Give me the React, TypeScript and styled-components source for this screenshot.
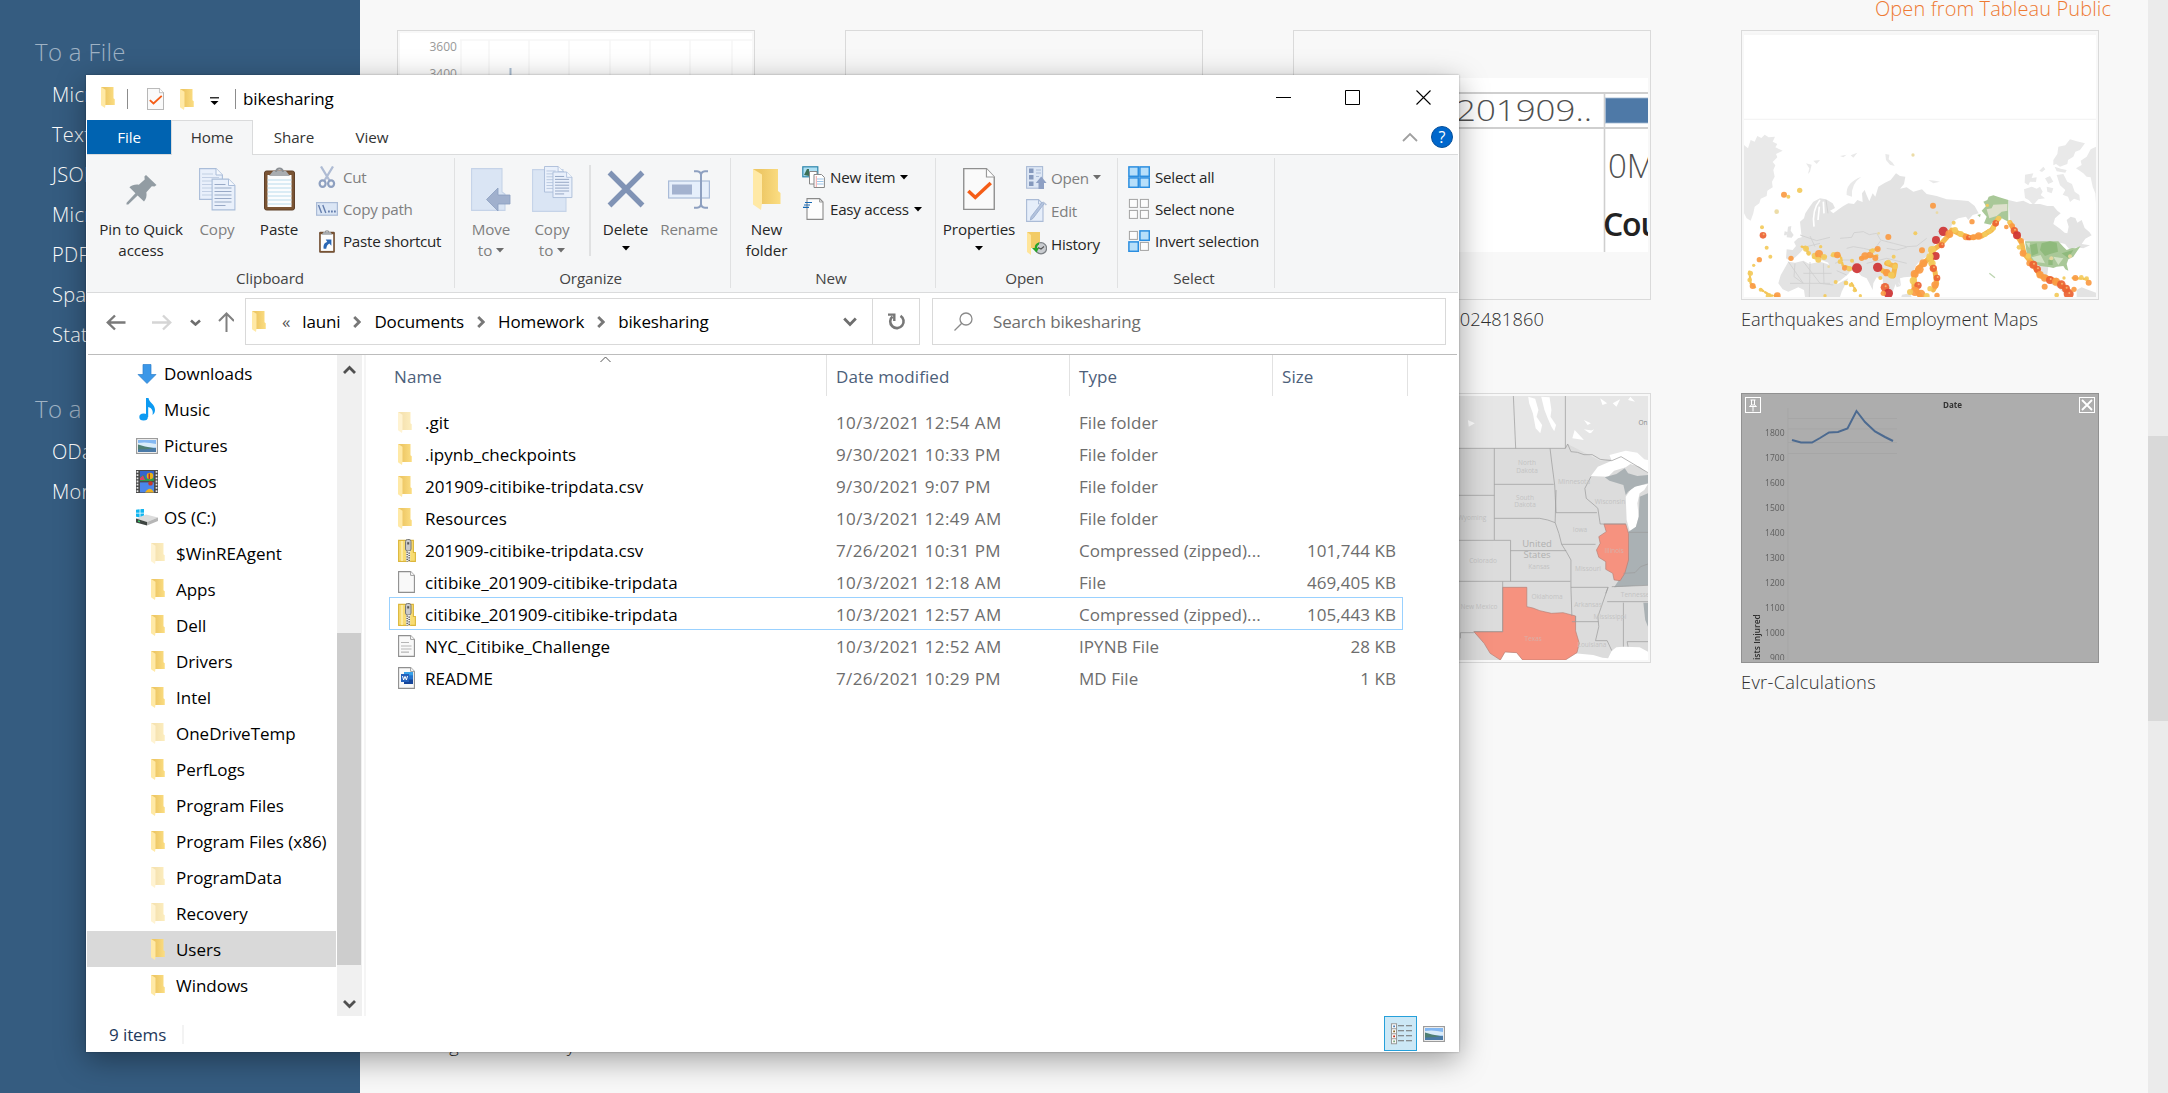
import React from 'react';
import styled, { createGlobalStyle, css } from 'styled-components';

const ui = `'Open Sans', 'Noto Sans', 'Liberation Sans', sans-serif`;

const Global = createGlobalStyle`
  html, body { margin: 0; padding: 0; background: #f8f8f8; }
  * { box-sizing: border-box; }
  svg { display: block; flex: none; }
`;

/* ---------- Tableau start page ---------- */

const Page = styled.div`
  position: relative;
  display: flex;
  width: 2168px;
  height: 1093px;
  overflow: hidden;
  background: #f8f8f8;
  font-family: ${ui};
`;

const Sidebar = styled.aside`
  width: 360px;
  flex: none;
  background: #355c80;
  padding-top: 33px;
`;

const SideHeading = styled.h2<{ $gap?: number }>`
  margin: ${p => p.$gap ?? 0}px 0 5px 35px;
  height: 37px;
  line-height: 37px;
  font-size: 24px;
  font-weight: 300;
  letter-spacing: 0.3px;
  color: #9fb2c4;
`;

const SideItem = styled.div`
  padding-left: 52px;
  height: 40px;
  line-height: 40px;
  font-size: 20px;
  font-weight: 300;
  letter-spacing: 0.3px;
  color: #ffffff;
`;

const Main = styled.main`
  flex: 1;
  min-width: 0;
`;

const TopLink = styled.div`
  height: 30px;
  padding-right: 37px;
  text-align: right;
  font-size: 20px;
  letter-spacing: 0.1px;
  line-height: 17px;
  font-weight: 300;
  color: #ee7a33;
`;

const CardGrid = styled.div`
  display: grid;
  grid-template-columns: repeat(4, 358px);
  grid-auto-rows: 363px;
  column-gap: 90px;
  padding-left: 37px;
`;

const Card = styled.div`
  display: flex;
  flex-direction: column;
`;

const Thumb = styled.div<{ $hover?: boolean }>`
  position: relative;
  width: 358px;
  height: 270px;
  padding: 2px;
  border: 1px solid ${p => (p.$hover ? '#919191' : '#dadada')};
  background: ${p => (p.$hover ? '#adadad' : '#f8f8f8')};
`;

const CardLabel = styled.div<{ $track?: number; $w?: number }>`
  padding-top: 5px;
  width: ${p => (p.$w ? `${p.$w}px` : 'auto')};
  text-align: ${p => (p.$w ? 'right' : 'left')};
  line-height: 27px;
  font-size: 18.3px;
  font-weight: 300;
  letter-spacing: ${p => p.$track ?? 0}px;
  white-space: nowrap;
  color: #2e2e2e;
`;

const CornerButton = styled.div<{ $side: 'left' | 'right' }>`
  position: absolute;
  top: 3px;
  ${p => p.$side}: 3px;
  display: flex;
  align-items: center;
  justify-content: center;
  width: 16px;
  height: 16px;
  border: 1px solid #fff;
`;

const PageScroll = styled.div`
  width: 20px;
  flex: none;
  background: #ebebeb;
  padding-top: 436px;
`;

const PageThumb = styled.div`
  height: 285px;
  background: #d9d9d9;
`;

/* ---------- Explorer window ---------- */

const Window = styled.section`
  position: absolute;
  left: 86px;
  top: 75px;
  width: 1373px;
  height: 977px;
  display: flex;
  flex-direction: column;
  padding: 0 1px;
  background: #fff;
  box-shadow: 0 0 2px rgba(0, 0, 0, 0.3), 0 8px 28px rgba(0, 0, 0, 0.36);
  color: #000;
  font-size: 17px;
`;

const TitleBar = styled.header`
  display: flex;
  align-items: center;
  height: 45px;
  flex: none;
  padding-left: 14px;
`;

const TitleIcon = styled.span<{ $ml?: number; $mt?: number }>`
  display: flex;
  margin-left: ${p => p.$ml ?? 0}px;
  margin-top: ${p => p.$mt ?? 0}px;
`;

const TitleSep = styled.i<{ $ml: number }>`
  width: 1px;
  height: 20px;
  margin: 2px 0 0 ${p => p.$ml}px;
  background: #8c8c8c;
`;

const TitleText = styled.span`
  margin-left: 7px;
  margin-top: 2px;
  letter-spacing: -0.12px;
`;

const Controls = styled.div`
  display: flex;
  align-items: center;
  margin-left: auto;
  margin-top: -1px;
  gap: 54px;
  padding-right: 27px;
  & > :last-child { margin-left: 2px; }
`;

const Tabs = styled.nav`
  display: flex;
  align-items: stretch;
  height: 35px;
  flex: none;
  border-bottom: 1px solid #dadbdc;
`;

const Tab = styled.div<{ $kind?: 'file' | 'active'; $w: number }>`
  display: flex;
  align-items: center;
  justify-content: center;
  width: ${p => p.$w}px;
  font-size: 15.2px;
  letter-spacing: -0.1px;
  color: #333;
  padding-bottom: ${p => (p.$kind === 'active' ? 2 : 1)}px;
  ${p => p.$kind === 'file' && css`background: #0063b1; color: #fff;`}
  ${p =>
    p.$kind === 'active' &&
    css`
      background: #f5f6f7;
      border: 1px solid #dadbdc;
      border-bottom: 0;
      margin-bottom: -1px;
    `}
`;

const TabTools = styled.div`
  display: flex;
  align-items: center;
  gap: 13px;
  margin-left: auto;
  padding-right: 5px;
`;

const Help = styled.span`
  display: flex;
  align-items: center;
  justify-content: center;
  width: 22px;
  height: 22px;
  border-radius: 50%;
  border: 1px solid #06509a;
  background: #0067cc;
  color: #fff;
  font-size: 16px;
  line-height: 20px;
`;

const Ribbon = styled.div`
  display: flex;
  height: 138px;
  flex: none;
  background: #f5f6f7;
  border-bottom: 1px solid #dadbdc;
`;

const Group = styled.div<{ $w: number; $pl: number }>`
  display: flex;
  flex-direction: column;
  width: ${p => p.$w}px;
  font-size: 15.2px;
  color: #262626;
  & > div { padding-left: ${p => p.$pl}px; }
`;

const GroupBody = styled.div`
  display: flex;
  height: 112px;
`;

const GroupCaption = styled.span<{ $pr?: number }>`
  padding-right: ${p => p.$pr ?? 4}px;
  text-align: center;
  line-height: 23px;
  letter-spacing: -0.1px;
  color: #444;
`;

const GroupSep = styled.i`
  width: 1px;
  margin: 3px 0 4px;
  background: #e0e1e2;
`;

const InnerSep = styled.i`
  width: 2px;
  height: 91px;
  margin: 10px 4px 0 7px;
  background: #e0e1e2;
`;

const Big = styled.div<{ $w: number; $off?: boolean }>`
  display: flex;
  flex-direction: column;
  align-items: center;
  width: ${p => p.$w}px;
  padding-top: 12px;
  color: ${p => (p.$off ? '#7f7f7f' : '#262626')};
  letter-spacing: -0.1px;
`;

const BigIcon = styled.span`
  display: flex;
  align-items: center;
  height: 44px;
  margin-bottom: 8px;
`;

const BigLine = styled.span<{ $up?: boolean }>`
  display: flex;
  align-items: center;
  gap: 4px;
  height: 21px;
  line-height: 21px;
  padding-bottom: ${p => (p.$up ? 4 : 0)}px;
  white-space: nowrap;
`;

const SmallCol = styled.div<{ $ml?: number; $row?: number }>`
  display: grid;
  grid-auto-rows: ${p => p.$row ?? 32}px;
  align-content: start;
  margin-left: ${p => p.$ml ?? 0}px;
  padding-top: 6px;
`;

const Small = styled.div<{ $off?: boolean; $icon?: number; $gap?: number }>`
  display: grid;
  grid-template-columns: ${p => p.$icon ?? 22}px auto auto;
  justify-content: start;
  justify-items: center;
  align-items: center;
  column-gap: ${p => p.$gap ?? 5}px;
  white-space: nowrap;
  letter-spacing: -0.27px;
  color: ${p => (p.$off ? '#7f7f7f' : '#262626')};
`;

const AddressRow = styled.div`
  display: flex;
  align-items: center;
  height: 62px;
  flex: none;
  margin: 0 1px;
  padding-bottom: 5px;
  border-bottom: 1px solid #bcbcbc;
`;

const NavIcon = styled.span<{ $ml: number }>`
  display: flex;
  margin-left: ${p => p.$ml}px;
  margin-top: 2px;
`;

const AddressBox = styled.div`
  display: flex;
  align-items: center;
  width: 675px;
  height: 47px;
  margin-left: 11px;
  margin-top: 1px;
  border: 1px solid #d9d9d9;
  padding-left: 6px;
`;

const Crumbs = styled.div`
  display: flex;
  align-items: center;
  gap: 13px;
  margin-left: 13px;
  letter-spacing: -0.15px;
`;

const Chevrons = styled.span`
  color: #555;
  margin: 0 -1px 0 3px;
  font-size: 17px;
  line-height: 20px;
`;

const AddressDrop = styled.span`
  margin-left: auto;
  padding-right: 15px;
`;

const Refresh = styled.span`
  display: flex;
  align-items: center;
  justify-content: center;
  width: 47px;
  height: 45px;
  padding-left: 2px;
  border-left: 1px solid #d9d9d9;
`;

const SearchBox = styled.div`
  display: flex;
  align-items: center;
  gap: 20px;
  width: 514px;
  height: 47px;
  margin-left: 12px;
  margin-top: 1px;
  padding-left: 21px;
  border: 1px solid #d9d9d9;
  color: #6d6d6d;
  letter-spacing: -0.15px;
`;

const Body = styled.div`
  display: flex;
  flex: 1;
  min-height: 0;
`;

const Tree = styled.div`
  width: 249px;
  flex: none;
  margin-right: 1px;
`;

const TreeRow = styled.div<{ $deep?: boolean; $on?: boolean }>`
  display: flex;
  align-items: center;
  gap: ${p => (p.$deep ? 11 : 6)}px;
  height: 36px;
  padding: 1px 0 0 ${p => (p.$deep ? 64 : 49)}px;
  background: ${p => (p.$on ? '#d9d9d9' : 'transparent')};
  letter-spacing: -0.02px;
  white-space: nowrap;
`;

const TreeScroll = styled.div`
  display: flex;
  flex-direction: column;
  align-items: center;
  width: 25px;
  height: 661px;
  flex: none;
  background: #f0f0f0;
`;

const ScrollArrow = styled.span<{ $h: number; $pt: number }>`
  height: ${p => p.$h}px;
  padding-top: ${p => p.$pt}px;
`;

const TreeThumb = styled.i`
  align-self: flex-start;
  width: 24px;
  height: 332px;
  background: #cdcdcd;
`;

const Splitter = styled.i`
  width: 2px;
  height: 661px;
  margin: 0 1px 0 2px;
  background: #f5f5f5;
`;

const List = styled.div`
  flex: 1;
  min-width: 0;
`;

const HeadRow = styled.div`
  position: relative;
  display: flex;
  height: 41px;
`;

const HeadCell = styled.div<{ $w: number; $pl: number }>`
  display: flex;
  align-items: center;
  width: ${p => p.$w}px;
  padding: 1px 0 0 ${p => p.$pl}px;
  border-right: 1px solid #e2e2e2;
  color: #4c607a;
  letter-spacing: 0.08px;
`;

const SortMark = styled.span`
  position: absolute;
  left: 233px;
  top: 1px;
`;

const FileRows = styled.div`
  padding: 9px 0 0 22px;
`;

const FileRow = styled.div<{ $on?: boolean }>`
  display: grid;
  grid-template-columns: 27px 411px 243px 190px 1fr;
  align-items: center;
  width: 1014px;
  height: 33px;
  margin-bottom: -1px;
  padding: 1px 6px 0 8px;
  border: 1px solid ${p => (p.$on ? '#99d1ff' : 'transparent')};
  white-space: nowrap;
`;

const FileName = styled.span`
  letter-spacing: 0.03px;
`;

const Meta = styled.span<{ $right?: boolean; $track?: number }>`
  color: #6d6d6d;
  letter-spacing: ${p => p.$track ?? 0.05}px;
  text-align: ${p => (p.$right ? 'right' : 'left')};
`;

const Status = styled.footer`
  display: flex;
  align-items: center;
  height: 36px;
  flex: none;
  padding: 0 13px 0 22px;
  color: #1e395b;
  letter-spacing: -0.1px;
`;

const StatusSep = styled.i`
  width: 2px;
  height: 19px;
  margin-left: 16px;
  background: #f3f3f3;
`;

const ViewButton = styled.span`
  display: flex;
  align-items: center;
  justify-content: center;
  width: 33px;
  height: 35px;
  margin: 0 6px 1px auto;
  border: 1px solid #26a0da;
  background: #cce8f6;
`;

/* ---------- Icons ---------- */

const Folder = ({ w = 14, h = 21, faded = false }) => (
  <svg width={w} height={h} viewBox="0 0 28 41" preserveAspectRatio="none" opacity={faded ? 0.5 : 1}>
    <defs>
      <linearGradient id="fold" x1="0" x2="1">
        <stop offset="0.3" stopColor="#eec866" />
        <stop offset="1" stopColor="#fbdd82" />
      </linearGradient>
    </defs>
    <path d="M0 0H25V22L27.5 24V35H8Z" fill="url(#fold)" />
    <path d="M0 0L9 5.5V34L8 41L0 35.5Z" fill="#ffe9a6" />
  </svg>
);

const Tri = ({ c = '#000', w = 8 }) => (
  <svg width={w} height="5" viewBox="0 0 8 5">
    <path d="M0 0H8L4 4.6Z" fill={c} />
  </svg>
);

const CheckDoc = ({ w, h }: { w: number; h: number }) => (
  <svg width={w} height={h} viewBox="0 0 30 42" preserveAspectRatio="none">
    <path d="M.7 .7H22L29.3 9V41.3H.7Z" fill="#fafafa" stroke="#8f8f8f" strokeWidth="1.3" />
    <path d="M22 .7V9H29.3" fill="#fff" stroke="#9a9a9a" strokeWidth="1.1" />
    <path d="M5 23L11.5 29.5L26 15" fill="none" stroke="#f55d17" strokeWidth="3.2" />
  </svg>
);

const Pin = () => (
  <svg width="31" height="31" viewBox="0 0 31 31" fill="#929ca3">
    <path d="M20 1L30.5 11L28.5 12.6L25.8 12.2L20.4 18.2C20.9 22 20.2 25 18 27.6L11.6 21.4L2.3 30.4L.4 30.6L.6 28.7L9.4 19.2L3.4 13.2C6 11 9 10.3 12.8 10.7L18.7 5.4L18.4 2.6Z" />
  </svg>
);

const Sheet = ({ x, y, lines }: { x: number; y: number; lines: string }) => (
  <g transform={`translate(${x} ${y})`}>
    <path d="M.6 .6H17L23.4 7V31.4H.6Z" fill="#e9f0fb" stroke="#aabdd9" strokeWidth="1.1" />
    <path d="M17 .6V7H23.4" fill="#f5f8fd" stroke="#aabdd9" strokeWidth="1" />
    <path d="M3 6H14M3 9.5H20M3 13H20M3 16.5H20M3 20H20M3 23.5H20M3 27H14" stroke={lines} strokeWidth="1.1" />
  </g>
);

const CopyIcon = () => (
  <svg width="37" height="43" viewBox="0 0 37 43">
    <Sheet x={0} y={0} lines="#c2cfe4" />
    <Sheet x={12.5} y={10.5} lines="#98a9c6" />
  </svg>
);

const PasteIcon = ({ w = 31, h = 44, small = false }) => (
  <svg width={w} height={h} viewBox="0 0 31 44" preserveAspectRatio="none">
    <rect x=".5" y="4" width="30" height="39" rx="2" fill="#7a5434" stroke="#5f4029" />
    <rect x="3.5" y="8" width="24" height="32" fill="#fcfdfe" />
    <path d="M5 9H26L22 4H9Z" fill="#a9adb1" />
    <path d="M12 5A3.5 3.5 0 0 1 19 5" fill="none" stroke="#8b8f94" strokeWidth="2" />
    {small ? (
      <path d="M9 36C8 28 11 24 16 23L13 18H24V30L20 26C16 28 15 31 14 36Z" fill="#2a67b5" />
    ) : (
      <path d="M3.5 13H27.5M3.5 17H27.5M3.5 21H27.5M3.5 25H27.5M3.5 29H27.5M3.5 33H27.5M3.5 37H27.5" stroke="#b9dcec" strokeWidth="1.2" />
    )}
  </svg>
);

const CutIcon = () => (
  <svg width="18" height="22" viewBox="0 0 18 22" fill="none">
    <path d="M3 .5L11.8 15M15 .5L6.2 15" stroke="#afbcd4" strokeWidth="2.3" />
    <ellipse cx="4.6" cy="17.6" rx="3" ry="3.3" stroke="#8ea0c0" strokeWidth="2.2" />
    <ellipse cx="13.1" cy="17.6" rx="3" ry="3.3" stroke="#8ea0c0" strokeWidth="2.2" />
  </svg>
);

const PathIcon = () => (
  <svg width="22" height="14" viewBox="0 0 22 14">
    <rect x=".6" y=".6" width="20.8" height="12.6" fill="#dbe6f5" stroke="#aabbd6" strokeWidth="1.2" />
    <path d="M2.5 3L5.5 11M6.8 3L9.8 11" stroke="#667fae" strokeWidth="1.4" />
    <path d="M12 9.5H13.8M15 9.5H16.8M18 9.5H19.8" stroke="#667fae" strokeWidth="1.8" />
  </svg>
);

const MoveIcon = () => (
  <svg width="40" height="43" viewBox="0 0 40 43">
    <path d="M.6 .6H31V24L34 26V42.4H.6Z" fill="#dae5f4" stroke="#c5d3e8" strokeWidth="1.1" />
    <path d="M15.5 31.5L27 20V27H39V36H27V43Z" fill="#a0b0cd" stroke="#8c9ebf" strokeWidth=".8" />
  </svg>
);

const CopyToIcon = () => (
  <svg width="41" height="46" viewBox="0 0 41 46">
    <path d="M.6 3.6H31V30L34 32V45.4H.6Z" fill="#dae5f4" stroke="#c5d3e8" strokeWidth="1.1" />
    <g transform="translate(12 0) scale(.83)"><Sheet x={0} y={0} lines="#b7c6de" /></g>
    <g transform="translate(20.5 5.5) scale(.83)"><Sheet x={0} y={0} lines="#8ea0c0" /></g>
  </svg>
);

const DeleteIcon = () => (
  <svg width="38" height="38" viewBox="0 0 38 38">
    <path d="M2.5 2.5L35.5 35.5M35.5 2.5L2.5 35.5" stroke="#8093b5" strokeWidth="5.4" />
  </svg>
);

const RenameIcon = () => (
  <svg width="42" height="39" viewBox="0 0 42 39">
    <rect x=".6" y="11" width="40.8" height="17" fill="#e6effb" stroke="#a9bbd8" strokeWidth="1.2" />
    <rect x="4" y="14.5" width="20" height="10" fill="#a3b2cf" />
    <path d="M26 1.2H29Q33 1.8 33 5V34Q33 37.2 29 37.8H26M40 1.2H37Q33 1.8 33 5M33 34Q33 37.2 37 37.8H40" fill="none" stroke="#8ea0c0" strokeWidth="2" />
  </svg>
);

const NewItemIcon = () => (
  <svg width="23" height="22" viewBox="0 0 23 22">
    <rect x=".8" y=".8" width="15" height="10" fill="#aee0f4" stroke="#2d86ab" strokeWidth="1.2" />
    <path d="M2 9L5 3H7V10Z" fill="#3c6f56" />
    <path d="M7.5 5.5H15V18H7.5Z" fill="#fff" stroke="#888" />
    <path d="M12 8.5H19.5L22.4 11.4V21.5H12Z" fill="#fff" stroke="#888" />
    <path d="M14.3 10V21" stroke="#ef8d8d" strokeWidth=".8" />
    <path d="M15 13H21.5M15 15.5H21.5M15 18H21.5" stroke="#9dc4e8" strokeWidth="1" />
  </svg>
);

const EasyIcon = () => (
  <svg width="22" height="22" viewBox="0 0 22 22">
    <path d="M4 .6H16.6L20 4V21.4H4Z" fill="#fdfdfd" stroke="#8a8a8a" strokeWidth="1.1" />
    <path d="M16.6 .6V4H20" fill="none" stroke="#9a9a9a" />
    <path d="M2 4.5H9M1 7H7M0 9.3H6" stroke="#1668b3" strokeWidth="1.2" />
  </svg>
);

const OpenIcon = () => (
  <svg width="21" height="23" viewBox="0 0 21 23">
    <rect x=".6" y=".6" width="16" height="21.6" fill="#dde7f5" stroke="#aabbd6" strokeWidth="1.1" />
    <path d="M3 2.5H7.5V7H3ZM3 9H7.5V13.5H3ZM3 15.5H7.5V20H3Z" fill="#8599bd" />
    <path d="M10 4H15M10 7H15M10 10.5H13" stroke="#aabbd6" />
    <path d="M15.2 10.5L20.6 17H18V23H12.5V17H9.8Z" fill="#8ea0c4" />
  </svg>
);

const EditIcon = () => (
  <svg width="21" height="23" viewBox="0 0 21 23">
    <path d="M.6 .6H12.5L17 5V22.4H.6Z" fill="#e6eefa" stroke="#aabbd6" strokeWidth="1.1" />
    <path d="M12.5 .6V5H17" fill="none" stroke="#aabbd6" />
    <path d="M18.2 4.6L7 19.4L4.4 21L5 17.8L16.2 3.2Z" fill="#b3c3de" stroke="#9cafce" strokeWidth=".9" />
    <path d="M17 3L20.4 6" stroke="#b5c2d8" strokeWidth="1.6" />
  </svg>
);

const HistoryIcon = () => (
  <svg width="21" height="23" viewBox="0 0 21 23">
    <path d="M1 0H14V16H5Z" fill="#f2cb66" />
    <path d="M1 0L5 3V23L1 20Z" fill="#ffe59a" />
    <circle cx="15" cy="16.3" r="5.6" fill="#c9ccd0" stroke="#7c8085" strokeWidth="1.3" />
    <path d="M12 15.500L15 17L18 14.500" fill="none" stroke="#555" strokeWidth="1.1" />
    <path d="M13 10.5Q8.5 11.5 8.8 16H6L10.5 20.5L13 16H11Q11 13 13 12.5Z" fill="#29a329" />
  </svg>
);

const Tiles = ({ on }: { on: boolean[] }) => (
  <svg width="22" height="22" viewBox="0 0 22 22">
    {on.map((v, i) => {
      const x = (i % 2) * 11, y = Math.floor(i / 2) * 11;
      return v ? (
        <rect key={i} x={x + 0.9} y={y + 0.9} width="9.4" height="9.4" fill="#b7dffa" stroke="#2b8ee0" strokeWidth="1.5" />
      ) : (
        <rect key={i} x={x + 1.4} y={y + 1.4} width="8" height="8" fill="#fcfcfc" stroke="#a2a2a2" />
      );
    })}
  </svg>
);

const DownloadIcon = () => (
  <svg width="22" height="22" viewBox="0 0 22 22">
    <path d="M7 1.5H15V11.5H20L11 20.5L2 11.5H7Z" fill="#3b97e8" stroke="#2d80cc" strokeWidth=".7" />
  </svg>
);

const MusicIcon = () => (
  <svg width="22" height="23" viewBox="0 0 22 23" fill="#0c9af2">
    <ellipse cx="7.6" cy="19" rx="4.3" ry="3.5" />
    <path d="M10 0H12.5C13 4.5 19 6 19 12C19 14 18 16 16.5 17C17.5 13 16 10 12.2 9V19H10Z" />
  </svg>
);

const PictureIcon = ({ h = 16 }) => (
  <svg width="22" height={h} viewBox="0 0 22 16" preserveAspectRatio="none">
    <rect x=".6" y=".6" width="20.8" height="14.8" fill="#fff" stroke="#9c9c9c" strokeWidth="1.2" />
    <rect x="2" y="2" width="18" height="12" fill="#84b8f2" />
    <path d="M2 5Q10 3.500 20 6V9.500H2Z" fill="#d9ecfa" />
    <path d="M2 6.500L9 8.500L20 10.500V14H2Z" fill="#4f7f73" />
    <path d="M2 11.500Q10 11.500 20 10V14H2Z" fill="#4a7aa8" />
  </svg>
);

const VideoIcon = () => (
  <svg width="22" height="23" viewBox="0 0 22 23">
    <rect width="22" height="23" fill="#4b4b4b" />
    <path d="M1.5 1V23M20.5 1V23" stroke="#e8e8e8" strokeWidth="1.7" strokeDasharray="1.8 1.4" />
    <rect x="4" y="1" width="14" height="10" fill="#3565cf" />
    <rect x="4" y="12.4" width="14" height="10" fill="#4b86ea" />
    <path d="M4 7L8 5L10 9L18 8V11H4Z" fill="#2f9a48" />
    <path d="M4 8L7 5.5L9 10H4Z" fill="#d9416e" />
    <circle cx="14" cy="6" r="3.3" fill="#e8b117" />
    <path d="M12.5 3.5H14V9H12.5Z" fill="#bb2f21" />
    <circle cx="14.5" cy="13.4" r="2.2" fill="#c73a26" />
    <path d="M9 22.4Q14 15 18 22.4Z" fill="#f0b11c" />
  </svg>
);

const DriveIcon = () => (
  <svg width="22" height="17" viewBox="0 0 22 17">
    <path d="M0 .8L3.6 .3V3.8H0ZM4.4 .2L8 -.3V3.8H4.4ZM0 4.6H3.6V8.2L0 7.8ZM4.4 4.6H8V8.8L4.4 8.3Z" fill="#13b6f0" />
    <path d="M0 9.5L10 5.5L22 8.5L11 13Z" fill="#dcdcdc" />
    <path d="M0 9.5L11 13V16.6L0 13.5Z" fill="#3f4542" />
    <path d="M11 13L22 8.5V12L11 16.6Z" fill="#b6b6b6" />
    <path d="M2 12L4 12.6" stroke="#35d06b" strokeWidth="1.4" />
  </svg>
);

const ZipIcon = () => (
  <svg width="18" height="23" viewBox="0 0 18 23">
    <path d="M.6 1.4H15.4V13.5H17.4V22.4H.6Z" fill="#f8dc72" stroke="#dcb63c" strokeWidth="1.1" />
    <path d="M4 2V22" stroke="#fdeeb0" strokeWidth="1.6" />
    <rect x="7.5" y=".5" width="5.5" height="11.5" rx="2" fill="#c9c9c9" stroke="#77797b" strokeWidth="1" />
    <path d="M9.2 3.2H11.2V5.5H9.2Z" fill="#555" />
    <path d="M10.2 12V22.6" stroke="#e8e8e8" strokeWidth="4" />
    <path d="M9.2 12.5V22.6M11.2 13.5V22.6" stroke="#666" strokeWidth="1.6" strokeDasharray="1.2 1.2" />
  </svg>
);

const DocIcon = ({ kind }: { kind?: 'text' | 'word' }) => (
  <svg width="17" height="22" viewBox="0 0 17 22">
    <path d="M.6 .6H12.6L16.4 4.4V21.4H.6Z" fill="#f9f9f9" stroke="#8f8f8f" strokeWidth="1.1" />
    <path d="M12.6 .6V4.4H16.4" fill="#fff" stroke="#9d9d9d" />
    {kind === 'text' && <path d="M3 7.5H11M3 11H9M8.5 11H13.5M3 14H13.5M3 17.2H11" stroke="#b5b5b5" strokeWidth="1.2" />}
    {kind === 'word' && (
      <g>
        <path d="M6 5H15V11H6Z" fill="#37a0e8" />
        <path d="M6 8.3H15V13H6Z" fill="#2573cc" />
        <path d="M6 12.5H15V17H6Z" fill="#15459a" />
        <rect x="3" y="7" width="8" height="8" fill="#2360bb" />
        <path d="M4.5 9L5.6 13L7 9.4L8.4 13L9.5 9" fill="none" stroke="#fff" strokeWidth="1" />
      </g>
    )}
  </svg>
);

const Chev = ({ d, c = '#6e6e6e', w = 2.6, s }: { d: string; c?: string; w?: number; s: [number, number] }) => (
  <svg width={s[0]} height={s[1]} viewBox={`0 0 ${s[0]} ${s[1]}`} fill="none">
    <path d={d} stroke={c} strokeWidth={w} />
  </svg>
);

const CrumbArrow = () => <Chev d="M1.2 1L6.2 6L1.2 11" s={[8, 12]} w={2.8} c="#777" />;

const DetailsIcon = () => (
  <svg width="22" height="22" viewBox="0 0 22 22">
    <path d="M1.5 .8H6.5V20.8H1.5ZM1.5 5.8H6.5M1.5 10.8H6.5M1.5 15.8H6.5" fill="#fff" stroke="#999" strokeWidth="1.1" />
    <path d="M3.2 2.4H5V4.2H3.2Z" fill="#4a7fb8" />
    <path d="M3.2 7.4H5V9.2H3.2Z" fill="#8a6b2c" />
    <path d="M3.2 12.4H5V14.2H3.2Z" fill="#c22f1b" />
    <path d="M3.2 17.4H5V19.2H3.2Z" fill="#7da77d" />
    <path d="M8 2.8H14M16 2.8H22M8 7.8H14M16 7.8H22M8 12.8H14M16 12.8H22M8 17.8H14M16 17.8H22" stroke="#6f6f6f" strokeWidth="1.1" />
  </svg>
);

/* ---------- Thumbnails ---------- */

const LineThumb = () => (
  <svg width="352" height="264" fontFamily="Open Sans" fontSize="12" fill="#999">
    <rect width="352" height="264" fill="#fff" />
    <path d="M61 7V264M89 7V264M129 7V264M169 7V264M210 7V264M250 7V264M290 7V264M332 7V264M60 7H352" stroke="#f6f6f6" strokeWidth="1.4" />
    <text x="29.500" y="17.500">3600</text>
    <text x="29.500" y="45">3400</text>
    <path d="M110.500 35V60L104 120" stroke="#a9bdd2" strokeWidth="2" fill="none" />
  </svg>
);

const BarThumb = () => (
  <svg width="352" height="264" fontFamily="Open Sans">
    <rect y="45" width="352" height="174" fill="#fff" />
    <path d="M0 60H352M0 95H352" stroke="#cfcfcf" strokeWidth="2" />
    <path d="M308.500 60V219" stroke="#cfcfcf" strokeWidth="1.6" />
    <rect x="309.500" y="65" width="43" height="25" fill="#4e79a7" stroke="#a3b9d2" strokeWidth=".8" />
    <text x="160" y="88" fontSize="30" fontWeight="300" fill="#505050" textLength="136" lengthAdjust="spacingAndGlyphs">201909..</text>
    <text x="312" y="145" fontSize="33" fontWeight="300" fill="#505050">0M</text>
    <text x="307" y="203" fontSize="32" fontWeight="600" fill="#222" letterSpacing="-1.200">Cou</text>
  </svg>
);

const dots: [number, number, number, string][] = [
  [192, 584, 9, 'o'], [205, 590, 6, 'y'], [239, 571, 8, 'y'], [170, 635, 7, 'p'], [126, 682, 6, 'y'], [129, 706, 10, 'r'],
  [140, 743, 6, 'y'], [151, 770, 6, 'y'], [118, 779, 8, 'o'], [101, 796, 5, 'y'], [91, 820, 8, 'y'], [89, 840, 7, 'y'],
  [98, 858, 9, 'o'], [122, 869, 6, 'y'], [146, 888, 9, 'y'], [172, 887, 10, 'o'], [213, 775, 8, 'o'], [258, 746, 9, 'y'],
  [266, 760, 7, 'y'], [285, 768, 10, 'y'], [297, 762, 12, 'o'], [295, 779, 9, 'y'], [312, 771, 9, 'y'], [341, 764, 8, 'y'],
  [352, 765, 10, 'o'], [360, 785, 7, 'y'], [374, 804, 8, 'o'], [388, 806, 8, 'y'], [411, 805, 15, 'R'], [396, 782, 6, 'y'],
  [425, 775, 8, 'o'], [435, 768, 11, 'o'], [450, 765, 10, 'o'], [458, 752, 7, 'y'], [473, 747, 9, 'o'], [466, 774, 9, 'o'],
  [473, 802, 14, 'R'], [505, 711, 9, 'o'], [586, 700, 6, 'y'], [639, 617, 9, 'o'], [651, 638, 4, 'p'], [579, 465, 5, 'p'],
  [476, 700, 4, 'p'], [505, 787, 8, 'y'], [521, 770, 6, 'y'], [525, 800, 8, 'y'], [500, 818, 11, 'o'], [514, 826, 10, 'y'],
  [481, 834, 6, 'y'], [495, 862, 13, 'r'], [505, 880, 14, 'R'], [490, 880, 8, 'o'], [606, 751, 9, 'o'], [670, 694, 14, 'R'],
  [648, 720, 12, 'R'], [688, 702, 12, 'o'], [665, 736, 9, 'r'], [636, 750, 12, 'y'], [647, 768, 12, 'R'], [630, 770, 11, 'y'],
  [636, 790, 11, 'y'], [640, 805, 11, 'r'], [610, 790, 12, 'o'], [598, 808, 13, 'o'], [584, 822, 12, 'o'], [580, 842, 11, 'y'],
  [594, 856, 11, 'r'], [585, 874, 14, 'o'], [603, 882, 13, 'o'], [570, 876, 9, 'y'], [651, 834, 10, 'r'], [645, 855, 11, 'o'],
  [630, 866, 8, 'y'], [651, 886, 8, 'o'], [620, 888, 9, 'y'], [701, 668, 6, 'y'], [705, 690, 9, 'y'], [722, 702, 9, 'y'],
  [738, 711, 10, 'o'], [746, 713, 8, 'r'], [760, 712, 9, 'o'], [776, 708, 11, 'o'], [795, 703, 8, 'y'], [808, 694, 8, 'y'],
  [820, 684, 8, 'y'], [827, 670, 10, 'r'], [836, 655, 8, 'y'], [756, 665, 8, 'o'], [802, 616, 5, 'y'], [859, 681, 7, 'o'],
  [868, 666, 6, 'y'], [877, 678, 8, 'o'], [883, 692, 11, 'r'], [891, 706, 12, 'R'], [904, 722, 8, 'o'], [897, 742, 7, 'y'],
  [909, 760, 10, 'o'], [925, 768, 8, 'y'], [928, 790, 9, 'o'], [940, 794, 12, 'r'], [952, 808, 11, 'r'], [960, 824, 11, 'o'],
  [974, 834, 11, 'o'], [990, 840, 12, 'r'], [1008, 845, 12, 'o'], [1024, 854, 13, 'r'], [1038, 866, 12, 'r'], [1046, 882, 15, 'r'],
  [974, 860, 9, 'o'], [1010, 885, 7, 'y'], [1062, 868, 8, 'o'], [1066, 834, 9, 'o'], [1084, 832, 7, 'y'], [1100, 836, 7, 'y'],
  [1106, 848, 9, 'o'], [1032, 834, 5, 'y'], [994, 775, 6, 'p'], [1050, 769, 6, 'p'], [378, 849, 7, 'y'], [392, 855, 6, 'y'],
  [404, 871, 6, 'y'], [347, 846, 6, 'y'], [421, 887, 5, 'y'], [315, 887, 5, 'y'], [326, 800, 4, 'p'], [302, 740, 5, 'y'],
];
const dotColor: Record<string, string> = { y: '#f3ca5b', o: '#fa9a43', r: '#ec6233', R: '#cf3434', p: '#ead9a0' };

const QuakeThumb = () => (
  <svg width="352" height="264" viewBox="72 99 1056 792">
    <rect x="72" y="99" width="1056" height="792" fill="#fff" />
    <path d="M72 102H1128M72 358H1128" stroke="#f4f4f4" strokeWidth="4" />
    <g fill="#e9e9e9">
      <path d="M72 435L84 445L92 420L104 425L112 408L124 414L134 404L146 412L165 410L158 425L172 432L166 442L188 452L168 462L172 472L158 486L166 496L160 510L164 530L156 545L158 562L142 572L140 588L122 596L118 610L104 620L100 640L92 662L80 655L72 640Z" />
      <path d="M1128 440L1112 448L1100 470L1082 482L1085 495L1068 505L1090 520L1100 530L1112 532L1118 560L1126 580L1128 610Z" />
      <path d="M1000 480L1012 462L1015 440L1036 436L1050 418L1070 424L1095 430L1080 450L1066 455L1060 470L1044 480L1042 492L1020 500L1008 492L1000 496ZM915 524L940 520L935 534L950 532L948 546L930 545L925 556L914 548ZM958 512L970 500L976 508L966 516ZM912 568L935 560L950 566L960 560L968 575L962 585L975 595L955 598L940 615L926 600L915 594ZM975 535L990 528L1000 545L985 552ZM980 560L1000 565L995 580L982 575ZM1010 525L1030 522L1042 545L1056 552L1064 575L1078 585L1080 602L1062 596L1050 606L1044 590L1028 584L1036 570L1020 556ZM1004 500L1022 506L1040 510L1036 518L1010 514Z" />
      <path d="M258 490L275 494L270 515L264 522L268 505ZM280 482L300 480L290 492ZM360 468L380 464L370 472ZM392 466L412 458L400 473ZM496 462L508 464L506 478L518 488L524 498L510 494L498 480ZM380 585Q376 548 424 530Q392 552 396 590Z" />
      <path d="M625 540L645 542L660 545L640 550Z" />
    </g>
    <g fill="#e3e3e3">
      <path d="M240 665L252 655L256 640L268 622L280 605L300 595L318 598L338 610L345 624L330 632L340 640L356 628L370 618L385 610L402 612L412 600L428 606L426 580L434 570L440 586L448 604L458 580L466 590L475 560L495 548L512 540L528 520L540 528L556 530L552 552L540 566L560 562L580 575L606 568L620 582L650 588L680 598L712 600L745 603L764 618L776 640L758 645L745 660L738 650L715 655L700 664L690 690L676 700L660 715L640 740L628 752L620 770L600 782L585 800L582 818L572 830L552 832L540 835L543 858L536 848L528 850L520 870L515 890L498 885L490 860L488 838L470 832L460 850L458 870L448 850L440 835L424 828L410 812L392 812L385 822L360 842L345 850L336 840L320 815L328 806L325 788L310 782L300 778L285 780L270 760L262 765L252 745L240 758L226 772L210 782L198 775L200 748L218 750L228 738L222 726L234 715L245 712Z" />
      <path d="M205 785L225 788L250 782L268 792L300 785L322 792L332 800L338 826L352 852L385 835L365 875L360 891L255 891L252 870L235 862L205 875L188 868L175 850L182 826Z" />
      <path d="M204 680L214 678L212 692L221 705L215 713L200 712ZM194 694L202 696L200 706L192 706ZM524 845L536 850L542 858L530 862ZM546 884L570 880L575 891H544Z" />
      <path d="M865 600L890 606L910 602L930 612L960 612L982 618L1000 618L1012 632L1022 640L1005 655L1000 672L1020 686L1034 698L1042 700L1046 680L1040 660L1052 650L1066 654L1072 668L1085 660L1094 684L1108 696L1115 706L1096 716L1085 732L1110 736L1090 745L1070 742L1050 750L1035 732L1020 728L915 722L905 712L895 700L886 680L870 665Z" />
      <path d="M938 790L985 800L982 825L995 838L1010 832L1018 846L1040 866L1060 885L1040 885L1010 860L960 835L948 815ZM1070 870L1085 862L1100 868L1128 878V891H1070Z" />
    </g>
    <path d="M300 600Q275 630 282 680M312 640L310 605M298 620L294 660" fill="none" stroke="#fff" strokeWidth="5" />
    <path d="M318 600L324 640M240 705L290 722L330 712M260 740L300 730M270 708L285 740M360 715L395 712L402 698L430 695L448 704L470 700L482 720L520 730L560 740L590 738L620 715M380 745L400 740L430 745L460 752L482 722M500 745L530 750L560 742M440 790L500 775L560 790M205 785L250 850M225 790L222 830L250 850M250 785L300 850L340 855M210 850L330 850M250 820H335M270 786L268 891M310 790L312 850M345 790L370 780L400 780L405 805M350 812L380 825" fill="none" stroke="#cfcfcf" strokeWidth="2.500" />
    <g fill="#a9c898">
      <path d="M790 605L802 600L806 590L820 586L838 592L865 600V665L845 655L832 668L820 664L812 674L792 670L800 650L785 632L798 618ZM772 645L782 642L780 652Z" />
      <path d="M915 724H1015L1030 740L1040 750L1056 744L1066 745L1082 738L1070 755L1060 770L1045 778L1040 792L1045 812L1036 808L1030 798L1010 800L1000 804L990 802L978 800L960 798L945 790L930 780L920 760Z" />
    </g>
    <path d="M800 628L815 625L820 614L862 612V632L845 635L830 648L808 655Z" fill="#dde0cc" />
    <path d="M965 730L990 724L1010 728L1014 755L990 762L975 768L960 750ZM930 735L950 730L955 760L935 768ZM1025 760L1060 750L1045 775ZM985 780H998V795H985Z" fill="#8fba7c" />
    <path d="M935 772L962 765L975 790L945 785ZM1000 770L1030 775L1015 795ZM918 728L930 728L928 745Z" fill="#d2e2c4" />
    <path d="M808 820L825 833" stroke="#bcd4b0" strokeWidth="4" />
    <path d="M695 690L720 702L750 713L785 708L815 690L832 660M870 668L890 704L905 730L912 760L940 795L962 828L1005 842L1040 868M688 704L660 735L636 752L634 790L645 815L650 850L640 870M630 772L600 800L582 825L582 860L600 888M488 812L520 828L526 795M500 790L522 798" fill="none" stroke="#f5b84e" strokeWidth="15" strokeLinecap="round" strokeLinejoin="round" />
    <path d="M255 740L270 768M280 772L318 770M335 766L362 768L368 796L400 806M420 774L472 766M395 850L410 876M88 815L92 850L105 862M245 740L262 746M450 752L476 746M1058 834L1105 838M122 868L150 886L175 888" fill="none" stroke="#f3c557" strokeWidth="7" strokeDasharray="9 7" strokeLinecap="round" />
    {dots.map(([x, y, r, c], i) => (
      <circle key={i} cx={x} cy={y} r={r} fill={dotColor[c]} opacity=".92" />
    ))}
    <g fill="#f7b06a">
      {dots.filter(d => d[3] === 'r').map(([x, y], i) => <circle key={i} cx={x + 2} cy={y - 3} r="3" />)}
    </g>
  </svg>
);

const stateNames: [number, number, string, number?][] = [
  [231, 69, 'North'], [231, 76.5, 'Dakota'], [278, 88, 'Minnesota'], [229, 104, 'South'], [229, 111, 'Dakota'],
  [314, 108, 'Wisconsin'], [284, 136, 'Iowa'], [187, 167, 'Colorado'], [243, 173, 'Kansas'], [292, 175, 'Missouri'],
  [318, 157, 'Illinois'], [251, 203, 'Oklahoma'], [292, 211, 'Arkansas'], [183, 213, 'New Mexico'], [237, 245, 'Texas'],
  [341, 201, 'Tennessee'], [314, 223, 'Mississippi'], [176, 124, 'Wyoming'], [296, 251, 'Louisiana'],
  [241, 151, 'United', 9.5], [241, 162, 'States', 9.5],
];

const StatesThumb = () => (
  <svg width="352" height="264" fontFamily="Open Sans" textAnchor="middle">
    <rect width="352" height="264" fill="#dcdcdc" />
    <g transform="translate(144 -36) scale(.4643 .33333)">
      <path d="M-310 108H448V300L390 290L345 302L275 252L270 265H-310Z" fill="#e6e6e6" />
      <g fill="#fff">
        <path d="M190 110L205 116L212 150L208 170L220 195L216 220L206 205L200 160L192 130ZM218 110L236 112L240 150L238 170L250 195L246 214L240 200L232 175L225 150Z" />
        <path d="M365 285L400 272L425 278L440 298L448 300V340L430 320L410 312L400 322L375 332L362 350L325 348L340 320L370 302Z" />
        <path d="M400 410L415 380L448 372L440 390L430 400L425 430L428 470L422 500L410 520L402 480Z" />
        <path d="M285 235L290 210L310 240ZM310 180L325 190L318 195ZM345 115L360 130L350 135ZM372 130L388 118L380 140ZM320 215L332 208L325 220ZM410 110L420 125L405 120ZM60 180L75 190L62 200ZM310 208L330 212L322 220Z" />
        <path d="M270 900L290 880L330 885L350 893L362 895L370 872L380 862L395 860L430 862L448 875V900ZM130 900L140 876L165 878L178 900Z" />
      </g>
      <path d="M355 352L380 342L398 325L405 340L425 348L448 345V370L420 380L405 395L400 405L395 375L365 362ZM430 410L448 400V675L375 682L395 640L405 600L406 515L422 500L428 470Z" fill="#aab1b4" />
      <path d="M438 728H448V800L442 780Z" fill="#aab1b4" />
      <path d="M353 492H400L406 520V600L398 640L388 662L375 660L372 640L357 628L357 605L342 592L337 570L345 550L342 530L358 515Z" fill="#f6927f" stroke="#b07a70" strokeWidth="1.500" />
      <path d="M135 682H187V740L200 744L215 752L240 760L265 758L292 768V812L300 850L295 878L270 900H178L165 878L140 876L130 900L108 880L95 850L73 815H135Z" fill="#f6927f" stroke="#b07a70" strokeWidth="1.500" />
      <path
        d="M0 265H270L275 252L282 275L296 277L310 284L328 284L345 298L370 302L390 290L448 338M158 108L163 265M270 108V265M117 265V540M0 406H117M117 373H245M117 475H215L232 480L248 488M237 265L240 300L247 375L250 458H338M250 390L248 488L256 520L262 553H335M0 541H152V664M152 572H272M135 664H281M262 553L272 575L282 600V682L284 768M0 664H135V815H73M282 682H362L357 700M284 785H341M292 768V785M325 350L312 385L315 415L332 435L340 445L345 492H400M362 682L350 730L340 770L342 800L335 842H360L370 872M395 728V860M360 725H448M370 680L448 676M406 517H448M395 640L420 638L432 620L448 612M405 860L403 845H448M44 835V818L73 818"
        fill="none"
        stroke="#9c9c9c"
        strokeWidth="1.800"
      />
    </g>
    {stateNames.map(([x, y, t, s], i) => (
      <text key={i} x={x} y={y} fontSize={s ?? 6.5} fill={s ? '#b0b0b0' : '#c3c3c3'} opacity={t === 'Texas' || t === 'Illinois' ? 0.6 : 1}>{t}</text>
    ))}
    <text x="347" y="29" fontSize="6.500" fill="#888">On</text>
  </svg>
);

const Soft = styled.svg`
  filter: blur(0.4px);
`;

const EvrThumb = () => (
  <Soft width="352" height="264" fontFamily="Open Sans" fontSize="8.500" fill="#5f5f5f">
    <path d="M44 22.500H153M44 33H153M44 46.500H153M44 57.500H153M44 12V264" stroke="#a5a5a5" strokeWidth=".8" />
    {[1800, 1700, 1600, 1500, 1400, 1300, 1200, 1100, 1000, 900].map((n, i) => (
      <text key={n} x="40.500" y={39.500 + i * 25.1} textAnchor="end">{n}</text>
    ))}
    <text x="199" y="11.500" fontSize="8" fontWeight="700" fill="#333">Date</text>
    <text transform="translate(15.500 264) rotate(-90)" fontSize="8.500" fontWeight="600" fill="#2c2c2c">ists Injured</text>
    <path d="M48 44L57 46.500H68L76 42L85 36.500L94 36L103.500 32.500L112.500 15L121 26L131 35.500L141 41L149 45" fill="none" stroke="#4c6a90" strokeWidth="2" />
  </Soft>
);

/* ---------- Data ---------- */

const files: [React.ReactNode, string, string, string, string][] = [
  [<Folder faded />, '.git', '10/3/2021 12:54 AM', 'File folder', ''],
  [<Folder />, '.ipynb_checkpoints', '9/30/2021 10:33 PM', 'File folder', ''],
  [<Folder />, '201909-citibike-tripdata.csv', '9/30/2021 9:07 PM', 'File folder', ''],
  [<Folder />, 'Resources', '10/3/2021 12:49 AM', 'File folder', ''],
  [<ZipIcon />, '201909-citibike-tripdata.csv', '7/26/2021 10:31 PM', 'Compressed (zipped)...', '101,744 KB'],
  [<DocIcon />, 'citibike_201909-citibike-tripdata', '10/3/2021 12:18 AM', 'File', '469,405 KB'],
  [<ZipIcon />, 'citibike_201909-citibike-tripdata', '10/3/2021 12:57 AM', 'Compressed (zipped)...', '105,443 KB'],
  [<DocIcon kind="text" />, 'NYC_Citibike_Challenge', '10/3/2021 12:52 AM', 'IPYNB File', '28 KB'],
  [<DocIcon kind="word" />, 'README', '7/26/2021 10:29 PM', 'MD File', '1 KB'],
];

const places: [React.ReactNode, string][] = [
  [<DownloadIcon />, 'Downloads'],
  [<MusicIcon />, 'Music'],
  [<PictureIcon />, 'Pictures'],
  [<VideoIcon />, 'Videos'],
  [<DriveIcon />, 'OS (C:)'],
];

const folders: [string, boolean][] = [
  ['$WinREAgent', true], ['Apps', false], ['Dell', false], ['Drivers', false], ['Intel', false],
  ['OneDriveTemp', true], ['PerfLogs', false], ['Program Files', false], ['Program Files (x86)', false],
  ['ProgramData', true], ['Recovery', true], ['Users', false], ['Windows', false],
];

const TableauPage = () => (
  <>
    <Sidebar>
      <SideHeading>To a File</SideHeading>
      {['Microsoft Excel', 'Text file', 'JSON file', 'Microsoft Access', 'PDF file', 'Spatial file', 'Statistical file'].map(t => (
        <SideItem key={t}>{t}</SideItem>
      ))}
      <SideHeading $gap={35}>To a Server</SideHeading>
      <SideItem>OData</SideItem>
      <SideItem>More...</SideItem>
    </Sidebar>
    <Main>
      <TopLink>Open from Tableau Public</TopLink>
      <CardGrid>
        <Card><Thumb><LineThumb /></Thumb></Card>
        <Card><Thumb /></Card>
        <Card>
          <Thumb><BarThumb /></Thumb>
          <CardLabel $w={251} $track={0.1}>NYC_Story_16302481860</CardLabel>
        </Card>
        <Card>
          <Thumb><QuakeThumb /></Thumb>
          <CardLabel $track={0.02}>Earthquakes and Employment Maps</CardLabel>
        </Card>
        <Card><Thumb /></Card>
        <Card><Thumb /></Card>
        <Card><Thumb><StatesThumb /></Thumb></Card>
        <Card>
          <Thumb $hover>
            <EvrThumb />
            <CornerButton $side="left">
              <svg width="10" height="13" viewBox="0 0 10 13" fill="none" stroke="#fff">
                <path d="M2.500 1H7.500M3.500 1V6M6.500 1V6M1.500 7.500L3.500 6H6.500L8.500 7.500ZM5 7.500V12.500" />
              </svg>
            </CornerButton>
            <CornerButton $side="right">
              <svg width="12" height="12" viewBox="0 0 12 12" stroke="#fff" strokeWidth="1.800">
                <path d="M1 1L11 11M11 1L1 11" />
              </svg>
            </CornerButton>
          </Thumb>
          <CardLabel $track={0.3}>Evr-Calculations</CardLabel>
        </Card>
        <Card>
          <Thumb />
          <CardLabel $track={0.5}>Testing US Summary</CardLabel>
        </Card>
      </CardGrid>
    </Main>
    <PageScroll><PageThumb /></PageScroll>
  </>
);

const RibbonBar = () => (
  <Ribbon>
    <Group $w={367} $pl={10}>
      <GroupBody>
        <Big $w={88}><BigIcon><Pin /></BigIcon><BigLine>Pin to Quick</BigLine><BigLine>access</BigLine></Big>
        <Big $w={64} $off><BigIcon><CopyIcon /></BigIcon><BigLine>Copy</BigLine></Big>
        <Big $w={60}><BigIcon><PasteIcon /></BigIcon><BigLine>Paste</BigLine></Big>
        <SmallCol $ml={7}>
          <Small $off><CutIcon />Cut</Small>
          <Small $off><PathIcon />Copy path</Small>
          <Small><PasteIcon w={16} h={23} small />Paste shortcut</Small>
        </SmallCol>
      </GroupBody>
      <GroupCaption $pr={1}>Clipboard</GroupCaption>
    </Group>
    <GroupSep />
    <Group $w={275} $pl={5}>
      <GroupBody>
        <Big $w={62} $off><BigIcon><MoveIcon /></BigIcon><BigLine>Move</BigLine><BigLine>to <Tri c="#6d6d6d" /></BigLine></Big>
        <Big $w={60} $off><BigIcon><CopyToIcon /></BigIcon><BigLine>Copy</BigLine><BigLine>to <Tri c="#6d6d6d" /></BigLine></Big>
        <InnerSep />
        <Big $w={61}><BigIcon><DeleteIcon /></BigIcon><BigLine>Delete</BigLine><BigLine $up><Tri /></BigLine></Big>
        <Big $w={66} $off><BigIcon><RenameIcon /></BigIcon><BigLine>Rename</BigLine></Big>
      </GroupBody>
      <GroupCaption>Organize</GroupCaption>
    </Group>
    <GroupSep />
    <Group $w={204} $pl={6}>
      <GroupBody>
        <Big $w={59}><BigIcon><Folder w={28} h={41} /></BigIcon><BigLine>New</BigLine><BigLine>folder</BigLine></Big>
        <SmallCol $ml={6}>
          <Small $icon={23}><NewItemIcon />New item <Tri /></Small>
          <Small $icon={23}><EasyIcon />Easy access <Tri /></Small>
        </SmallCol>
      </GroupBody>
      <GroupCaption>New</GroupCaption>
    </Group>
    <GroupSep />
    <Group $w={181} $pl={4}>
      <GroupBody>
        <Big $w={78}><BigIcon><CheckDoc w={32} h={42} /></BigIcon><BigLine>Properties</BigLine><BigLine $up><Tri /></BigLine></Big>
        <SmallCol $ml={8} $row={33}>
          <Small $off $icon={21} $gap={4}><OpenIcon />Open <Tri c="#6d6d6d" /></Small>
          <Small $off $icon={21} $gap={4}><EditIcon />Edit</Small>
          <Small $icon={21} $gap={4}><HistoryIcon />History</Small>
        </SmallCol>
      </GroupBody>
      <GroupCaption>Open</GroupCaption>
    </Group>
    <GroupSep />
    <Group $w={156} $pl={10}>
      <GroupBody>
        <SmallCol>
          <Small><Tiles on={[true, true, true, true]} />Select all</Small>
          <Small><Tiles on={[false, false, false, false]} />Select none</Small>
          <Small><Tiles on={[false, true, true, false]} />Invert selection</Small>
        </SmallCol>
      </GroupBody>
      <GroupCaption>Select</GroupCaption>
    </Group>
    <GroupSep />
  </Ribbon>
);

const Explorer = () => (
  <Window>
    <TitleBar>
      <TitleIcon $mt={-1}><Folder /></TitleIcon>
      <TitleSep $ml={12} />
      <TitleIcon $ml={19} $mt={3}><CheckDoc w={17} h={22} /></TitleIcon>
      <TitleIcon $ml={16} $mt={4}><Folder /></TitleIcon>
      <TitleIcon $ml={16} $mt={7}>
        <svg width="9" height="9" viewBox="0 0 9 9"><path d="M0 .8H9" stroke="#000" strokeWidth="1.200" /><path d="M.5 4H8.500L4.500 8Z" /></svg>
      </TitleIcon>
      <TitleSep $ml={16} />
      <TitleText>bikesharing</TitleText>
      <Controls>
        <Chev d="M0 7.5H15" s={[15, 15]} c="#000" w={1} />
        <Chev d="M.5 .5H14.500V14.500H.5Z" s={[15, 15]} c="#000" w={1} />
        <Chev d="M.5 .5L14.500 14.500M14.500 .5L.5 14.500" s={[15, 15]} c="#000" w={1.1} />
      </Controls>
    </TitleBar>
    <Tabs>
      <Tab $kind="file" $w={84}>File</Tab>
      <Tab $kind="active" $w={82}>Home</Tab>
      <Tab $w={82}>Share</Tab>
      <Tab $w={74}>View</Tab>
      <TabTools>
        <Chev d="M1 9L8 2L15 9" s={[16, 11]} c="#a0a0a0" w={1.8} />
        <Help>?</Help>
      </TabTools>
    </Tabs>
    <RibbonBar />
    <AddressRow>
      <NavIcon $ml={18}><Chev d="M9 1.500L1.800 8.500L9 15.500M2 8.500H19.500" s={[20, 17]} c="#7a7a7a" w={2.4} /></NavIcon>
      <NavIcon $ml={26}><Chev d="M11 1.500L18.200 8.500L11 15.500M18 8.500H0" s={[20, 17]} c="#d5d5d5" w={2.4} /></NavIcon>
      <NavIcon $ml={18}><Chev d="M1 1.500L5.500 5.500L10 1.500" s={[11, 7]} /></NavIcon>
      <NavIcon $ml={17}><Chev d="M1 9L8.500 1.500L16 9M8.500 1.500V20" s={[16, 20]} c="#808080" w={2} /></NavIcon>
      <AddressBox>
        <Folder />
        <Crumbs>
          <Chevrons>«</Chevrons>
          launi <CrumbArrow /> Documents <CrumbArrow /> Homework <CrumbArrow /> bikesharing
        </Crumbs>
        <AddressDrop><Chev d="M1.200 1.500L7 7.500L12.800 1.500" s={[14, 10]} w={2.8} /></AddressDrop>
        <Refresh>
          <svg width="18" height="17" viewBox="0 0 18 17" fill="none" stroke="#777" strokeWidth="2.600">
            <path d="M12.500 2.800A6.700 6.700 0 1 1 4.500 3.400" />
            <path d="M0 1.600H6.300V8" strokeWidth="2.400" />
          </svg>
        </Refresh>
      </AddressBox>
      <SearchBox>
        <svg width="19" height="19" viewBox="0 0 19 19" fill="none" stroke="#8a8a8a" strokeWidth="1.300">
          <circle cx="12" cy="7" r="6" />
          <path d="M7.800 11.300L.5 18.500" />
        </svg>
        Search bikesharing
      </SearchBox>
    </AddressRow>
    <Body>
      <Tree>
        {places.map(([icon, name]) => <TreeRow key={name}>{icon}{name}</TreeRow>)}
        {folders.map(([name, faded]) => (
          <TreeRow key={name} $deep $on={name === 'Users'}><Folder faded={faded} />{name}</TreeRow>
        ))}
      </Tree>
      <TreeScroll>
        <ScrollArrow $h={278} $pt={10}><Chev d="M1 8L6.500 2.500L12 8" s={[13, 10]} w={2.8} c="#505050" /></ScrollArrow>
        <TreeThumb />
        <ScrollArrow $h={51} $pt={34}><Chev d="M1 2L6.500 7.500L12 2" s={[13, 10]} w={2.8} c="#505050" /></ScrollArrow>
      </TreeScroll>
      <Splitter />
      <List>
        <HeadRow>
          <HeadCell $w={460} $pl={27}>Name</HeadCell>
          <HeadCell $w={243} $pl={9}>Date modified</HeadCell>
          <HeadCell $w={203} $pl={9}>Type</HeadCell>
          <HeadCell $w={135} $pl={9}>Size</HeadCell>
          <SortMark><Chev d="M.5 6L5.500 1L10.500 6" s={[11, 7]} c="#555" w={1} /></SortMark>
        </HeadRow>
        <FileRows>
          {files.map(([icon, name, date, type, size], i) => (
            <FileRow key={i} $on={i === 6}>
              {icon}
              <FileName>{name}</FileName>
              <Meta $track={0.38}>{date}</Meta>
              <Meta>{type}</Meta>
              <Meta $right>{size}</Meta>
            </FileRow>
          ))}
        </FileRows>
      </List>
    </Body>
    <Status>
      9 items
      <StatusSep />
      <ViewButton><DetailsIcon /></ViewButton>
      <PictureIcon />
    </Status>
  </Window>
);

export default function App() {
  return (
    <Page>
      <Global />
      <TableauPage />
      <Explorer />
    </Page>
  );
}
